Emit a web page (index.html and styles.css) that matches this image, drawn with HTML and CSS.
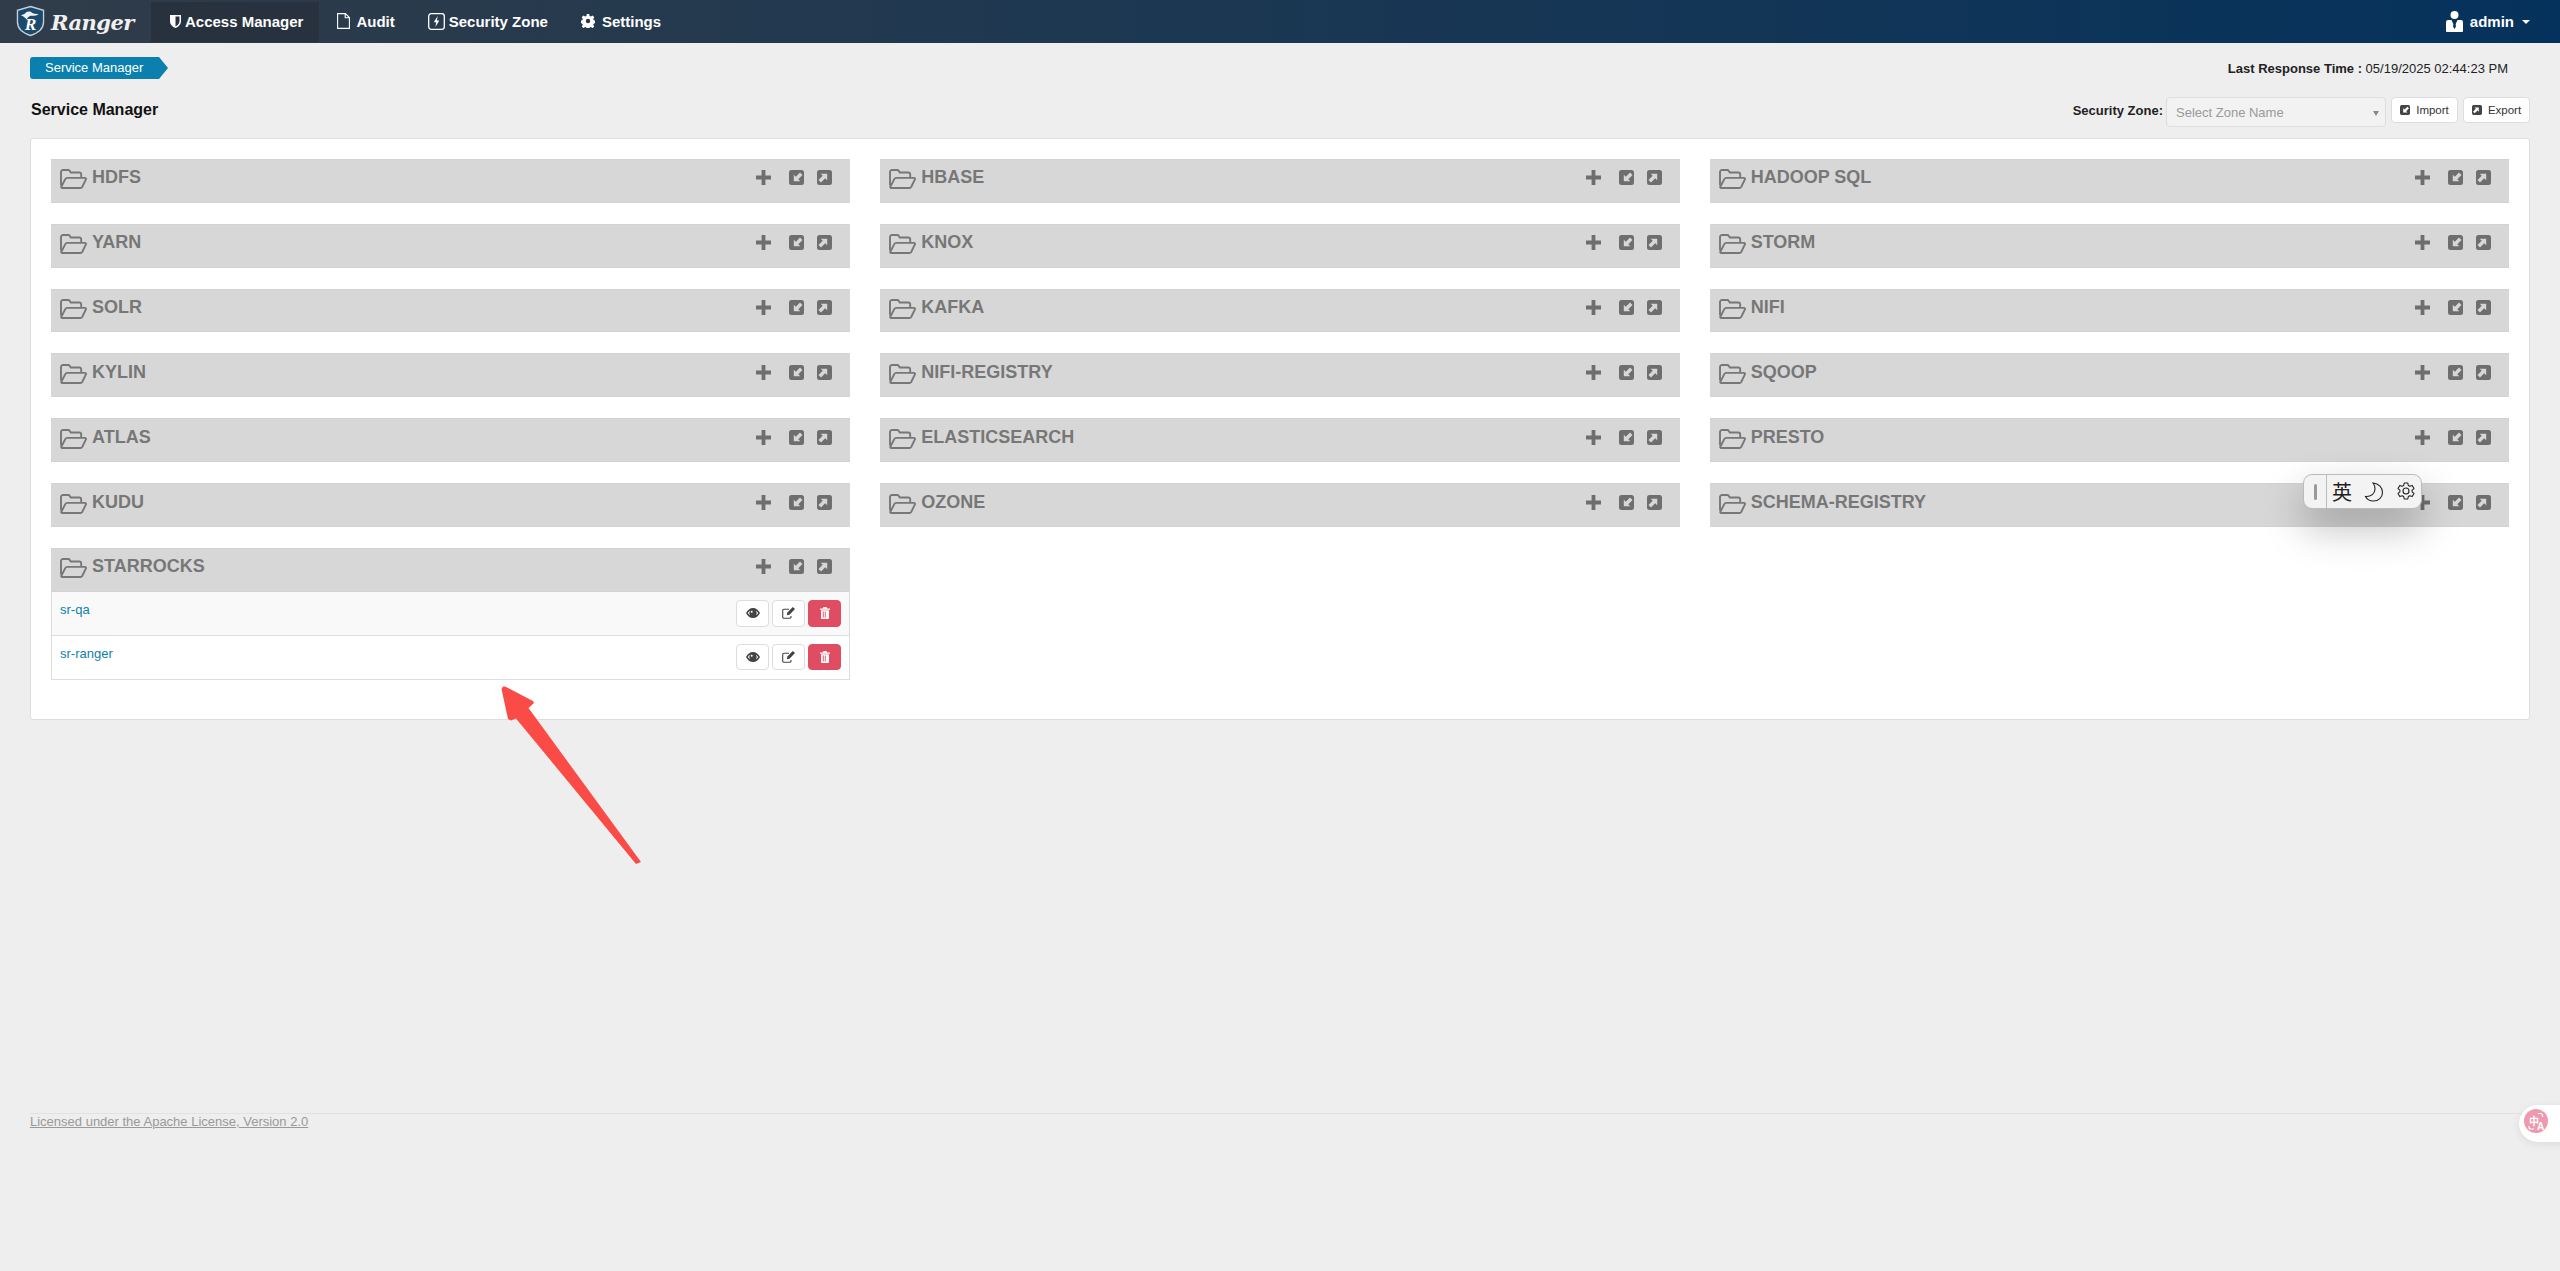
FILE: index.html
```html
<!DOCTYPE html>
<html lang="en">
<head>
<meta charset="utf-8">
<title>Ranger - Service Manager</title>
<link rel="stylesheet" href="styles.css">
</head>
<body>
<svg class="defs" width="0" height="0" aria-hidden="true">
  <symbol id="i-folder" viewBox="0 0 27 20">
    <path d="M1 16.500V3a2 2 0 0 1 2-2h5.200a2 2 0 0 1 1.600.9l1 1.600h8.400a2 2 0 0 1 2 2V8.500" fill="none" stroke="currentColor" stroke-width="1.900"/>
    <path d="M1.600 17.300 5.400 9.900a2 2 0 0 1 1.700-1H25a1 1 0 0 1 .9 1.500l-3.700 7.600a2 2 0 0 1-1.700 1H2.600a1 1 0 0 1-1-1.700z" fill="none" stroke="currentColor" stroke-width="1.900"/>
  </symbol>
  <symbol id="i-plus" viewBox="0 0 15 15">
    <path d="M5.600 0h3.800v5.600H15v3.800H9.400V15H5.600V9.400H0V5.600h5.600z" fill="currentColor"/>
  </symbol>
  <symbol id="i-in" viewBox="0 0 15 15">
    <path fill-rule="evenodd" d="M2.500 0h10A2.500 2.500 0 0 1 15 2.500v10a2.500 2.500 0 0 1-2.500 2.500h-10A2.500 2.500 0 0 1 0 12.500v-10A2.500 2.500 0 0 1 2.500 0zM11 2.500 6.800 6.700 4.800 4.700v6.500h6.500l-2-2 4.200-4.200z" fill="currentColor"/>
  </symbol>
  <symbol id="i-out" viewBox="0 0 15 15">
    <path fill-rule="evenodd" d="M2.500 0h10A2.500 2.500 0 0 1 15 2.500v10a2.500 2.500 0 0 1-2.500 2.500h-10A2.500 2.500 0 0 1 0 12.500v-10A2.500 2.500 0 0 1 2.500 0zM4 12.500l4.200-4.200 2 2V3.800H3.700l2 2L1.500 10z" fill="currentColor"/>
  </symbol>
  <symbol id="i-eye" viewBox="0 0 14 10">
    <path fill-rule="evenodd" d="M7 0c3 0 5.500 2 7 5-1.500 3-4 5-7 5S1.500 8 0 5c1.500-3 4-5 7-5zM1.800 5c.6.900 1.300 1.700 2.200 2.300a4 4 0 0 1 0-4.600C3.100 3.300 2.400 4.100 1.800 5zm10.400 0c-.6-.9-1.300-1.700-2.200-2.300a4 4 0 0 1 0 4.600c.9-.6 1.600-1.400 2.200-2.300zM5.700 2.800a1 1 0 1 0 0 2 1 1 0 0 0 0-2z" fill="currentColor"/>
  </symbol>
  <symbol id="i-edit" viewBox="0 0 13 12">
    <path d="M9 9v1a1.300 1.300 0 0 1-1.300 1.300H2A1.300 1.300 0 0 1 .7 10V3.500A1.300 1.300 0 0 1 2 2.200h5" fill="none" stroke="currentColor" stroke-width="1.100"/>
    <path d="M10.800 0 13 2.100 7.500 7.700l-2.700.6.600-2.700z" fill="currentColor"/>
  </symbol>
  <symbol id="i-trash" viewBox="0 0 10 12">
    <path fill-rule="evenodd" d="M3.500 0h3l.7 1.500H10v1.200H0V1.500h2.800zM1 3.300h8V11a1 1 0 0 1-1 1H2a1 1 0 0 1-1-1zM2.800 4.500v6h.9v-6zm2 0v6h.9v-6z" fill="currentColor"/>
  </symbol>
</svg>

<header class="topbar">
  <a class="brand">
    <svg class="brand-mark" viewBox="0 0 30 32" aria-hidden="true">
      <path d="M15 1 28.500 5v12c0 7-6 11.500-13.500 14C7.500 28.500 1.500 24 1.500 17V5z" fill="#1d4a6c" stroke="#c4d0da" stroke-width="1.400"/>
      <path d="M5 10c2.500-.3 4-1 5.500-3 2-1.500 5-1 6 .5 2 1 4 1.500 7 1.500-2.500 1.500-5.500 2-8.500 1.500-2 1-3 2-4 4-1-1.500-2.500-3-6-4.500z" fill="#f0f3f5"/>
      <text class="brand-r" x="9" y="25">R</text>
    </svg>
    <span class="brand-name">Ranger</span>
  </a>
  <nav class="mainnav">
    <a class="navitem is-active">
      <svg class="nav-shield" viewBox="0 0 11 13" aria-hidden="true"><path fill-rule="evenodd" d="M0 0h11v6c0 3.500-2.500 5.800-5.500 7C2.500 11.800 0 9.500 0 6zM5.500 1.500V11.400C7.800 10.300 9.500 8.700 9.500 6V1.500z" fill="#fff"/></svg>
      Access Manager
    </a>
    <a class="navitem">
      <svg class="nav-doc" viewBox="0 0 13 16" aria-hidden="true"><path d="M.6.600h7.800l4 4v10.800H.6zM8.200.800v4h4" fill="none" stroke="#fff" stroke-width="1.100"/></svg>
      Audit
    </a>
    <a class="navitem">
      <svg class="nav-zone" viewBox="0 0 17 17" aria-hidden="true"><rect x=".7" y=".7" width="15.600" height="15.600" rx="2.500" fill="none" stroke="#fff" stroke-width="1.300"/><path d="M9.700 3 5.800 9.200h2.400L7.400 14l3.900-6.500H8.900z" fill="#fff"/></svg>
      Security Zone
    </a>
    <a class="navitem">
      <svg class="nav-gear" viewBox="0 0 14 14" aria-hidden="true"><path fill-rule="evenodd" d="M5.800 0h2.400l.4 2 1.300.6 1.700-1.100 1.700 1.700-1.100 1.700.6 1.300 2 .4v2.400l-2 .4-.6 1.300 1.100 1.700-1.700 1.700-1.700-1.100-1.300.6-.4 2H5.800l-.4-2-1.300-.6-1.700 1.100L.7 12.400l1.100-1.700-.6-1.300-2-.4V6.600l2-.4.6-1.300L.7 3.200 2.400 1.500l1.700 1.100 1.300-.6zM7 4.800a2.200 2.200 0 1 0 0 4.400 2.200 2.200 0 0 0 0-4.400z" fill="#fff"/></svg>
      Settings
    </a>
  </nav>
  <a class="usermenu">
    <svg class="user-icon" viewBox="0 0 17 21" aria-hidden="true"><circle cx="8.500" cy="4" r="4" fill="#fff"/><path d="M2 9h3.500l3 6.500L11.500 9H15a2 2 0 0 1 2 2v9a1 1 0 0 1-1 1H1a1 1 0 0 1-1-1v-9a2 2 0 0 1 2-2z" fill="#fff"/><path d="M7.500 9.500h2l-.4 2 .9 4-1.500 2.500L7 15.500l.9-4z" fill="#0a3459"/></svg>
    <span class="user-name">admin</span>
    <span class="caret"></span>
  </a>
</header>

<main class="page">
  <div class="crumbrow">
    <span class="crumb">Service Manager</span>
    <p class="lastresp"><b>Last Response Time :</b> 05/19/2025 02:44:23 PM</p>
  </div>

  <div class="titlerow">
    <h1 class="title">Service Manager</h1>
    <div class="tools">
      <label class="zonelabel">Security Zone:</label>
      <div class="zoneselect"><span>Select Zone Name</span><i class="zonearrow"></i></div>
      <button class="toolbtn"><svg class="toolicon"><use href="#i-in"/></svg>Import</button>
      <button class="toolbtn"><svg class="toolicon"><use href="#i-out"/></svg>Export</button>
    </div>
  </div>

  <section class="panel">
    <div class="services">
      <article class="service"><div class="svc-head"><svg class="svc-folder"><use href="#i-folder"/></svg><h2 class="svc-name">HDFS</h2><svg class="svc-plus"><use href="#i-plus"/></svg><svg class="svc-box"><use href="#i-in"/></svg><svg class="svc-box"><use href="#i-out"/></svg></div></article>
      <article class="service"><div class="svc-head"><svg class="svc-folder"><use href="#i-folder"/></svg><h2 class="svc-name">HBASE</h2><svg class="svc-plus"><use href="#i-plus"/></svg><svg class="svc-box"><use href="#i-in"/></svg><svg class="svc-box"><use href="#i-out"/></svg></div></article>
      <article class="service"><div class="svc-head"><svg class="svc-folder"><use href="#i-folder"/></svg><h2 class="svc-name">HADOOP SQL</h2><svg class="svc-plus"><use href="#i-plus"/></svg><svg class="svc-box"><use href="#i-in"/></svg><svg class="svc-box"><use href="#i-out"/></svg></div></article>
      <article class="service"><div class="svc-head"><svg class="svc-folder"><use href="#i-folder"/></svg><h2 class="svc-name">YARN</h2><svg class="svc-plus"><use href="#i-plus"/></svg><svg class="svc-box"><use href="#i-in"/></svg><svg class="svc-box"><use href="#i-out"/></svg></div></article>
      <article class="service"><div class="svc-head"><svg class="svc-folder"><use href="#i-folder"/></svg><h2 class="svc-name">KNOX</h2><svg class="svc-plus"><use href="#i-plus"/></svg><svg class="svc-box"><use href="#i-in"/></svg><svg class="svc-box"><use href="#i-out"/></svg></div></article>
      <article class="service"><div class="svc-head"><svg class="svc-folder"><use href="#i-folder"/></svg><h2 class="svc-name">STORM</h2><svg class="svc-plus"><use href="#i-plus"/></svg><svg class="svc-box"><use href="#i-in"/></svg><svg class="svc-box"><use href="#i-out"/></svg></div></article>
      <article class="service"><div class="svc-head"><svg class="svc-folder"><use href="#i-folder"/></svg><h2 class="svc-name">SOLR</h2><svg class="svc-plus"><use href="#i-plus"/></svg><svg class="svc-box"><use href="#i-in"/></svg><svg class="svc-box"><use href="#i-out"/></svg></div></article>
      <article class="service"><div class="svc-head"><svg class="svc-folder"><use href="#i-folder"/></svg><h2 class="svc-name">KAFKA</h2><svg class="svc-plus"><use href="#i-plus"/></svg><svg class="svc-box"><use href="#i-in"/></svg><svg class="svc-box"><use href="#i-out"/></svg></div></article>
      <article class="service"><div class="svc-head"><svg class="svc-folder"><use href="#i-folder"/></svg><h2 class="svc-name">NIFI</h2><svg class="svc-plus"><use href="#i-plus"/></svg><svg class="svc-box"><use href="#i-in"/></svg><svg class="svc-box"><use href="#i-out"/></svg></div></article>
      <article class="service"><div class="svc-head"><svg class="svc-folder"><use href="#i-folder"/></svg><h2 class="svc-name">KYLIN</h2><svg class="svc-plus"><use href="#i-plus"/></svg><svg class="svc-box"><use href="#i-in"/></svg><svg class="svc-box"><use href="#i-out"/></svg></div></article>
      <article class="service"><div class="svc-head"><svg class="svc-folder"><use href="#i-folder"/></svg><h2 class="svc-name">NIFI-REGISTRY</h2><svg class="svc-plus"><use href="#i-plus"/></svg><svg class="svc-box"><use href="#i-in"/></svg><svg class="svc-box"><use href="#i-out"/></svg></div></article>
      <article class="service"><div class="svc-head"><svg class="svc-folder"><use href="#i-folder"/></svg><h2 class="svc-name">SQOOP</h2><svg class="svc-plus"><use href="#i-plus"/></svg><svg class="svc-box"><use href="#i-in"/></svg><svg class="svc-box"><use href="#i-out"/></svg></div></article>
      <article class="service"><div class="svc-head"><svg class="svc-folder"><use href="#i-folder"/></svg><h2 class="svc-name">ATLAS</h2><svg class="svc-plus"><use href="#i-plus"/></svg><svg class="svc-box"><use href="#i-in"/></svg><svg class="svc-box"><use href="#i-out"/></svg></div></article>
      <article class="service"><div class="svc-head"><svg class="svc-folder"><use href="#i-folder"/></svg><h2 class="svc-name">ELASTICSEARCH</h2><svg class="svc-plus"><use href="#i-plus"/></svg><svg class="svc-box"><use href="#i-in"/></svg><svg class="svc-box"><use href="#i-out"/></svg></div></article>
      <article class="service"><div class="svc-head"><svg class="svc-folder"><use href="#i-folder"/></svg><h2 class="svc-name">PRESTO</h2><svg class="svc-plus"><use href="#i-plus"/></svg><svg class="svc-box"><use href="#i-in"/></svg><svg class="svc-box"><use href="#i-out"/></svg></div></article>
      <article class="service"><div class="svc-head"><svg class="svc-folder"><use href="#i-folder"/></svg><h2 class="svc-name">KUDU</h2><svg class="svc-plus"><use href="#i-plus"/></svg><svg class="svc-box"><use href="#i-in"/></svg><svg class="svc-box"><use href="#i-out"/></svg></div></article>
      <article class="service"><div class="svc-head"><svg class="svc-folder"><use href="#i-folder"/></svg><h2 class="svc-name">OZONE</h2><svg class="svc-plus"><use href="#i-plus"/></svg><svg class="svc-box"><use href="#i-in"/></svg><svg class="svc-box"><use href="#i-out"/></svg></div></article>
      <article class="service"><div class="svc-head"><svg class="svc-folder"><use href="#i-folder"/></svg><h2 class="svc-name">SCHEMA-REGISTRY</h2><svg class="svc-plus"><use href="#i-plus"/></svg><svg class="svc-box"><use href="#i-in"/></svg><svg class="svc-box"><use href="#i-out"/></svg></div></article>
      <article class="service">
        <div class="svc-head"><svg class="svc-folder"><use href="#i-folder"/></svg><h2 class="svc-name">STARROCKS</h2><svg class="svc-plus"><use href="#i-plus"/></svg><svg class="svc-box"><use href="#i-in"/></svg><svg class="svc-box"><use href="#i-out"/></svg></div>
        <div class="svc-rows">
          <div class="svc-row is-odd">
            <a class="svc-link">sr-qa</a>
            <div class="rowbtns">
              <button class="rowbtn"><svg class="ic-eye"><use href="#i-eye"/></svg></button>
              <button class="rowbtn"><svg class="ic-edit"><use href="#i-edit"/></svg></button>
              <button class="rowbtn is-danger"><svg class="ic-trash"><use href="#i-trash"/></svg></button>
            </div>
          </div>
          <div class="svc-row">
            <a class="svc-link">sr-ranger</a>
            <div class="rowbtns">
              <button class="rowbtn"><svg class="ic-eye"><use href="#i-eye"/></svg></button>
              <button class="rowbtn"><svg class="ic-edit"><use href="#i-edit"/></svg></button>
              <button class="rowbtn is-danger"><svg class="ic-trash"><use href="#i-trash"/></svg></button>
            </div>
          </div>
        </div>
      </article>
    </div>
  </section>

  <footer class="footer"><a class="license">Licensed under the Apache License, Version 2.0</a></footer>
</main>

<svg class="annotation" viewBox="0 0 145 185" aria-hidden="true">
  <path d="M1.500 5 3 2.500 5 2.500 33 17 34 19 28.500 24 141 178 136 180 16 34.500 11 36.500 8 35z" fill="#fb4b47"/>
</svg>

<div class="ime">
  <span class="ime-handle"><i></i></span>
  <span class="ime-lang">英</span>
  <svg class="ime-moon" viewBox="0 0 20 20" aria-hidden="true"><path d="M9 1c6 .5 9.500 4.500 9.500 9.500S14.500 19 9.500 19c-3.500 0-6.500-1.500-8-4.500 5.500.5 9.500-3 9.500-7.500 0-2.500-.8-4.500-2-6z" fill="none" stroke="#222" stroke-width="1.100"/></svg>
  <svg class="ime-gear" viewBox="0 0 20 20" aria-hidden="true"><path d="M8.200 1h3.600l.5 2.500 1.500.8 2.400-.9 1.800 3.200-1.900 1.600v1.600l1.900 1.600-1.800 3.200-2.400-.9-1.500.8-.5 2.500H8.200l-.5-2.500-1.500-.8-2.400.9L2 11.400l1.900-1.600V8.200L2 6.600l1.800-3.200 2.400.9 1.500-.8z" fill="none" stroke="#222" stroke-width="1.100" stroke-linejoin="round"/><circle cx="10" cy="9" r="3" fill="none" stroke="#222" stroke-width="1.100"/></svg>
</div>

<div class="translate">
  <span class="translate-dot">
    <span class="t-zh">中</span><span class="t-a">A</span>
    <svg class="t-arcs" viewBox="0 0 24 24" aria-hidden="true"><path d="M14 4.500h2.500a2 2 0 0 1 2 2v1.500M5 17v1a2 2 0 0 0 2 2h3" fill="none" stroke="#fff" stroke-width="1.200"/></svg>
  </span>
</div>
</body>
</html>
```

FILE: styles.css
```css
* { box-sizing: border-box; }
html, body { margin: 0; padding: 0; }
body {
  position: relative;
  min-height: 1271px;
  background: #eeeeee;
  color: #222;
  font-family: "Liberation Sans", Arial, sans-serif;
  font-size: 13px;
  overflow: hidden;
}
.defs { position: absolute; }

/* top bar */
.topbar {
  display: flex;
  align-items: center;
  height: 43px;
  padding-left: 16px;
  background: linear-gradient(90deg, #303c49 0%, #05325c 100%);
  color: #fff;
}
.brand { display: flex; align-items: center; width: 135px; height: 43px; }
.brand-mark { width: 29px; height: 32px; flex: none; margin-top: -1px; }
.brand-r { font: italic 700 18px "Liberation Serif", serif; fill: #fff; }
.brand-name {
  margin-left: 6px;
  margin-top: 1px;
  font: italic 700 21px "DejaVu Serif", serif;
  letter-spacing: -.5px;
  color: #f0f0f0;
}
.mainnav { display: flex; height: 40px; align-self: flex-start; margin-top: 2px; }
.navitem {
  display: flex;
  align-items: center;
  gap: 4px;
  padding: 0 15px 2px 18px;
  font-size: 15px;
  font-weight: 700;
  color: #fff;
}
.navitem.is-active { background: #27323e; padding: 0 16px 2px 19px; }
.navitem:nth-child(2) { gap: 6px; }
.nav-shield { width: 11px; height: 13px; }
.nav-doc { width: 13px; height: 16px; }
.nav-zone { width: 17px; height: 17px; }
.nav-gear { width: 14px; height: 14px; margin-right: 3px; }
.usermenu { display: flex; align-items: center; margin-left: auto; padding-right: 30px; }
.user-icon { width: 17px; height: 21px; }
.user-name { margin-left: 7px; font-size: 15px; font-weight: 700; }
.caret {
  margin-left: 8px;
  border: 4px solid transparent;
  border-top-color: #fff;
  border-bottom-width: 0;
}

/* page */
.page { padding: 14px 30px 0; }
.crumbrow { display: flex; align-items: center; justify-content: space-between; height: 22px; padding-right: 22px; }
.crumb {
  position: relative;
  display: block;
  height: 22px;
  width: 129px;
  padding-left: 15px;
  line-height: 22px;
  font-size: 13px;
  color: #fff;
  background: #0b7fad;
  border-radius: 3px 0 0 3px;
  white-space: nowrap;
}
.crumb::after {
  content: "";
  position: absolute;
  left: 100%;
  top: 0;
  border-style: solid;
  border-width: 11px 0 11px 9px;
  border-color: transparent transparent transparent #0b7fad;
}
.lastresp { margin: 0; font-size: 13px; color: #222; }

.titlerow { display: flex; justify-content: space-between; height: 30px; margin: 18px 0 11px; }
.title { margin: 0 0 0 1px; font-size: 16px; font-weight: 700; line-height: 25px; color: #111; }
.tools { display: flex; align-items: flex-start; }
.zonelabel { font-size: 13px; font-weight: 700; line-height: 28px; margin-right: 3px; color: #222; }
.zoneselect {
  position: relative;
  width: 220px;
  height: 30px;
  padding-left: 9px;
  background: #f2f2f2;
  border: 1px solid #dddddd;
  border-radius: 4px;
  color: #999;
  font-size: 13px;
  line-height: 30px;
}
.zonearrow {
  position: absolute;
  right: 6px;
  top: 13px;
  border: 3px solid transparent;
  border-top: 5px solid #888;
  border-bottom-width: 0;
}
.toolbtn {
  display: flex;
  align-items: center;
  justify-content: center;
  gap: 6px;
  width: 67px;
  height: 26px;
  margin-left: 5px;
  padding: 0;
  background: #fff;
  border: 1px solid #dddddd;
  border-radius: 4px;
  color: #333;
  font: 11.500px "Liberation Sans", Arial, sans-serif;
}
.toolicon { width: 10px; height: 10px; color: #444; }

/* panel */
.panel {
  background: #fff;
  border: 1px solid #dddddd;
  border-radius: 3px;
  padding: 20px 20px 39px;
}
.services { display: grid; grid-template-columns: repeat(3, 1fr); column-gap: 30px; row-gap: 21px; align-items: start; }
.svc-head {
  display: flex;
  align-items: center;
  height: 43.830px;
  padding: 0 18px 3px 9px;
  background: #d7d7d7;
  color: #6e6e6e;
  border: 1px solid #d2d2d2;
  border-width: 1px 0;
}
.svc-folder { width: 27px; height: 20px; color: #777; flex: none; }
.svc-name {
  margin: 0 0 3px 5px;
  flex: 1;
  font-size: 18px;
  font-weight: 700;
  color: #777;
}
.svc-plus { width: 15px; height: 15px; margin: 0 18px 3px 0; }
.svc-box { width: 15px; height: 15px; margin: 0 0 3px 13px; }
.svc-plus + .svc-box { margin-left: 0; }

.svc-rows { border: 1px solid #dddddd; border-top: 0; }
.svc-row { display: flex; justify-content: space-between; height: 43px; padding: 8px 8px 0; border-bottom: 1px solid #dddddd; }
.svc-row:last-child { border-bottom: 0; }
.svc-row:last-child .rowbtn { height: 26px; }
.svc-row.is-odd { height: 44px; background: #f9f9f9; }
.svc-link { font-size: 13px; color: #0b7fad; line-height: 20px; }
.rowbtns { display: flex; gap: 3px; }
.rowbtn {
  display: flex;
  align-items: center;
  justify-content: center;
  width: 33px;
  height: 27px;
  padding: 0;
  background: #fff;
  border: 1px solid #dddddd;
  border-radius: 4px;
  color: #444;
}
.rowbtn.is-danger { background: #e04c62; border-color: #e04c62; color: #fff; }
.ic-eye { width: 14px; height: 10px; }
.ic-edit { width: 13px; height: 12px; }
.ic-trash { width: 10px; height: 12px; }

/* footer */
.footer { margin-top: 393px; border-top: 1px solid #e2e2e2; }
.license { font-size: 13px; color: #999; text-decoration: underline; }

/* overlays */
.annotation { position: absolute; left: 500px; top: 684px; width: 145px; height: 185px; }
.ime {
  position: absolute;
  left: 2303px;
  top: 474px;
  display: flex;
  align-items: center;
  width: 119px;
  height: 35px;
  background: #f3f3f3;
  border: 1px solid #bbbbbb;
  border-radius: 9px;
  box-shadow: 0 18px 40px rgba(0, 0, 0, .28);
}
.ime-handle { display: flex; align-items: center; justify-content: center; width: 23px; height: 100%; border-right: 1px solid #bbb; }
.ime-handle i { width: 3px; height: 16px; background: #999; border-radius: 2px; }
.ime-lang { margin-left: 5px; font: 20px "Noto Sans CJK SC", sans-serif; line-height: 33px; color: #222; }
.ime-moon { width: 20px; height: 20px; margin-left: 12px; }
.ime-gear { width: 20px; height: 20px; margin-left: 12px; }
.translate {
  position: absolute;
  left: 2519px;
  top: 1105px;
  width: 60px;
  height: 37px;
  padding: 4px 0 0 5px;
  background: #fff;
  border-radius: 19px 0 0 19px;
  box-shadow: 0 2px 8px rgba(0, 0, 0, .08);
}
.translate-dot {
  position: relative;
  display: block;
  width: 24px;
  height: 24px;
  border-radius: 50%;
  background: #ee99ae;
  color: #fff;
}
.t-arcs { position: absolute; inset: 0; width: 24px; height: 24px; }
.t-zh { position: absolute; left: 5px; top: 6px; font: 700 10px/12px "Noto Sans CJK SC", sans-serif; }
.t-a { position: absolute; left: 13px; top: 12px; font: 700 10px/11px "Liberation Sans", sans-serif; }
```
